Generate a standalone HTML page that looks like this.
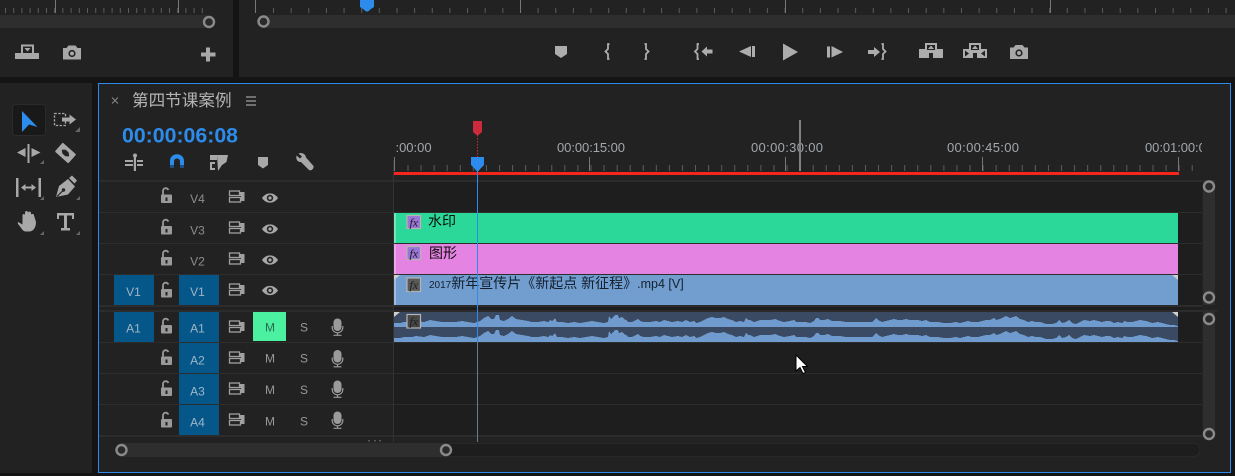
<!DOCTYPE html>
<html lang="zh"><head><meta charset="utf-8"><title>Timeline</title>
<style>
html,body{margin:0;padding:0;background:#141414;width:1235px;height:476px;overflow:hidden}
svg{display:block;position:absolute;left:0;top:0}
text{font-family:"Liberation Sans","Noto Sans CJK SC",sans-serif}
</style></head><body>
<svg width="1235" height="476" viewBox="0 0 1235 476" xmlns="http://www.w3.org/2000/svg">
<defs>
<clipPath id="rc"><rect x="395" y="130" width="807" height="30"/></clipPath>
<g id="lock"><rect x="-5.500" y="-1" width="11" height="8.500" rx="1" fill="#9a9a9a"/><rect x="-1" y="2" width="2" height="3.500" fill="#222"/><path d="M-3.500 -1V-4.200a2.800 2.800 0 0 1 5.400-1.300" fill="none" stroke="#9a9a9a" stroke-width="1.800"/></g>
<g id="sync"><rect x="-7.500" y="-5.500" width="10" height="4.500" fill="none" stroke="#a0a0a0" stroke-width="1.300"/><rect x="-7.500" y="1" width="11" height="4.500" fill="none" stroke="#a0a0a0" stroke-width="1.300"/><path d="M3 -4.500H7.500V4.500H4V-.5H3Z" fill="#a0a0a0"/></g>
<g id="eye"><path d="M-8 0C-4-6.200 4-6.200 8 0C4 6.200-4 6.200-8 0Z" fill="#a8a8a8"/><circle r="3.200" fill="#222"/><circle r="1.600" fill="#a8a8a8"/></g>
<g id="mic"><rect x="-4" y="-8.500" width="8" height="12.500" rx="4" fill="#9a9a9a"/><path d="M-5.300 -1V0.500a5.300 5.300 0 0 0 10.600 0V-1" fill="none" stroke="#9a9a9a" stroke-width="1.200"/><path d="M0 6V8M-4 8.300H4" stroke="#9a9a9a" stroke-width="1.200"/></g>
<g id="cam"><path d="M-9 -4.500H-5.500L-3.500-7H3.500L5.500-4.500H9V7H-9Z" fill="#a8a8a8"/><circle cy="1" r="3.600" fill="#222"/><circle cy="1" r="2" fill="#a8a8a8"/></g>
<polygon id="wave" fill="#6f9bce" shape-rendering="crispEdges" points="394,327 394,323 400,323 404,322 412,322 416,321 424,322 430,320 436,321 442,322 450,322 456,322 462,321 468,322 474,323 480,321 484,318 488,316 491,319 494,319 496,315 499,315 500,320 504,321 508,319 512,316 516,319 522,320 528,321 532,322 538,322 544,321 548,322 550,320 552,321 554,319 555,318 557,322 562,322 568,323 574,322 580,323 586,322 592,321 598,322 604,323 608,322 609,316 611,319 613,317 615,315 618,315 619,318 622,317 624,319 626,320 628,322 632,322 636,320 638,319 640,321 644,322 650,322 656,321 660,322 664,320 668,321 672,322 678,321 682,322 686,320 690,322 694,321 696,323 700,322 704,320 708,318 712,317 716,318 720,318 724,317 728,319 732,320 736,322 740,321 744,322 746,318 748,320 750,320 754,322 760,320 766,320 770,320 775,319 780,321 784,322 790,321 794,320 796,322 800,322 806,322 810,323 814,321 816,318 818,318 820,320 824,320 828,319 832,321 836,321 840,321 846,322 850,322 854,322 858,322 862,322 868,322 872,322 874,320 876,318 878,320 882,322 886,321 890,320 894,319 898,320 902,320 906,319 910,320 914,320 918,320 922,321 926,320 930,322 934,322 938,322 944,323 950,323 956,322 960,323 964,322 968,321 972,322 978,322 982,321 986,320 990,320 994,318 996,320 1000,319 1002,318 1006,316 1010,318 1016,316 1020,319 1024,320 1028,322 1032,321 1036,322 1040,322 1046,324 1052,324 1056,323 1059,320 1062,323 1066,322 1069,320 1072,323 1076,324 1080,322 1084,320 1090,321 1094,320 1098,321 1102,322 1106,321 1110,321 1114,323 1118,322 1122,323 1124,321 1128,322 1132,322 1136,321 1140,320 1146,321 1152,323 1158,322 1162,323 1166,324 1170,325 1174,325 1178,326 1178,327"/>
</defs>

<rect width="1235" height="476" fill="#141414"/>
<rect x="0" y="0" width="233" height="77" fill="#222"/>
<rect x="239" y="0" width="996" height="77" fill="#222"/>
<rect x="0" y="83" width="92" height="390" fill="#222"/>
<rect x="99" y="84" width="1131" height="388" fill="#222"/>

<line x1="5" y1="10.500" x2="205" y2="10.500" stroke="#5c5c5c" stroke-width="5" stroke-dasharray="1 7.200"/>
<path d="M55.500 0V13M178.500 0V13" stroke="#777"/>
<rect x="0" y="15" width="209" height="13" fill="#2e2e2e"/>
<circle cx="209" cy="22" r="5" fill="#2a2a2a" stroke="#8a8a8a" stroke-width="2.400"/>
<line x1="273" y1="10.500" x2="1235" y2="10.500" stroke="#5c5c5c" stroke-width="5" stroke-dasharray="1 16.640"/>
<path d="M255.500 0V13M520.500 0V13M785.500 0V13M1050.500 0V13" stroke="#777"/>
<rect x="263" y="15" width="972" height="13" fill="#2e2e2e"/>
<circle cx="263.500" cy="21.500" r="5" fill="#2a2a2a" stroke="#8a8a8a" stroke-width="2.400"/>
<path d="M360 0H374V7L371 9L368 11.500H366L363 9L360 7Z" fill="#2d8ceb"/>

<g fill="#a8a8a8">
<path d="M15 53H21V44.500H34V53H39V59H15Z"/><rect x="23" y="46.500" width="9" height="6.500" fill="#222"/><path d="M24.500 48H30.500L27.500 51.500Z"/>
<use href="#cam" x="72" y="52.500"/>
<path d="M206 47.500H210V52.500H215.500V56.500H210V61.500H206V56.500H201V52.500H206Z"/>
</g>
<g fill="#adadad">
<path d="M555 46H567V54L561 58L555 54Z"/>
<path d="M609.500 44H608V49L605.500 51.500L608 54V59H609.500" fill="none" stroke="#adadad" stroke-width="1.800"/>
<path d="M644.500 44H646V49L648.500 51.500L646 54V59H644.500" fill="none" stroke="#adadad" stroke-width="1.800"/>
<path d="M699 44H697.500V49L695 51.500L697.500 54V59H699" fill="none" stroke="#adadad" stroke-width="1.800"/>
<path d="M701.500 51.500L707 46.500V49.500H712.500V53.500H707V56.500Z"/>
<path d="M739 51.500L751 46V57Z"/><rect x="752" y="46" width="3" height="11"/>
<path d="M783 43.500L798 52L783 60.500Z"/>
<rect x="827" y="46.500" width="3" height="11"/><path d="M831.500 46L843 52L831.500 57.500Z"/>
<path d="M868 50H874V47L880 52L874 57V54H868Z"/>
<path d="M881.500 44H883V49L885.500 51.500L883 54V59H881.500" fill="none" stroke="#adadad" stroke-width="1.800"/>
<path d="M919 49H925V43H937V49H943V58H933V53H929V58H919Z"/><rect x="927" y="45" width="8" height="5" fill="#222"/><path d="M931 45.500L934 49H928Z"/>
<path d="M963 49H969V43H981V49H987V58H977V53H973V58H963Z"/><rect x="971" y="45" width="8" height="5" fill="#222"/><path d="M975 45.500L978 49H972Z"/>
<path d="M965 50.500L969 53.500L965 56.500ZM985 50.500L981 53.500L985 56.500Z" fill="#222"/>
<use href="#cam" x="1019" y="52"/>
</g>

<rect x="98.500" y="83.500" width="1132" height="389" fill="none" stroke="#2d8ceb" stroke-width="1"/>

<rect x="12.500" y="104.500" width="33" height="31" rx="3" fill="#191919" stroke="#2b2b2b"/>
<path d="M22 111L37.500 127L29 124.500L22 132Z" fill="#2d8ceb"/>
<g fill="#a8a8a8" stroke="none">
<rect x="54.500" y="113.500" width="11" height="12" fill="none" stroke="#a8a8a8" stroke-width="1.300" stroke-dasharray="2.300 1.500"/>
<path d="M62 117.500H69.500V114.500L76 119.500L69.500 124.500V121.500H62Z"/>
<rect x="27.500" y="144" width="2" height="19"/><path d="M17 152.500L25.500 148V157ZM40.500 152.500L31.500 148V157Z"/>
<g transform="translate(65.500 153) rotate(42)"><rect x="-9" y="-6" width="18" height="12" rx="1"/><path d="M-5 0L-2-2.500H2L5 0L2 2.500H-2Z" fill="#222"/></g>
<rect x="16" y="178" width="2.500" height="19"/><rect x="38.500" y="178" width="2.500" height="19"/>
<path d="M21 187.500L25.500 184V186.500H31.500V184L36 187.500L31.500 191V188.500H25.500V191Z"/>
<path d="M56 197L59 186L68 179L75 186.500L68 194.500Z"/><path d="M69 178L72 175.500L77 180.500L74.500 183.500Z"/><path d="M57 196.500L63 190.500" stroke="#222" stroke-width="1.200"/><circle cx="63.500" cy="190" r="1.700" fill="#222"/>
<path d="M19 222.500L22.500 224.500V215.500C22.500 213.500 25 213.500 25 215.500V212.500C25 210.500 28 210.500 28 212.500V213C28 211 31 211 31 213V215C31 213.500 34 213.500 34 215.500L36 222C36 228 33 231.500 29 231.500H26C23 231.500 22 229 20 226.500L18 224C17.500 222.500 18 221.500 19 222.500Z"/>
<path d="M57 213H74V219H72V215.500H67V228H70V230.500H61V228H64V215.500H59V219H57Z"/>
<path d="M44 160V164H40Z M80 196V200H76Z M44 196V200H40Z M44 231V235H40Z M80 231V235H76Z M80 127V132H75Z" fill="#666"/>
</g>

<path d="M112 97.500L118 103.500M118 97.500L112 103.500" stroke="#8a8a8a" stroke-width="1"/>
<text x="132" y="106" font-size="16.600" fill="#b4b4b4" style="font-family:'WenQuanYi Zen Hei','Noto Sans CJK SC',sans-serif">第四节课案例</text>
<path d="M246 97H256M246 101H256M246 105H256" stroke="#a0a0a0" stroke-width="1.300"/>
<text x="122" y="142.500" font-size="21.300" font-weight="700" fill="#2d8ceb" textLength="116" lengthAdjust="spacingAndGlyphs">00:00:06:08</text>

<g fill="#a8a8a8">
<path d="M133.800 156h2.200V171H133.800Z"/><circle cx="135" cy="155.500" r="2"/>
<path d="M125 160H133V162H125ZM125 164H133V166H125ZM137 160H143V162H137ZM137 164H143V166H137Z"/>
<path d="M170 168V161C170 152 184 152 184 161V168H180V161.500C180 157.500 174 157.500 174 161.500V168Z" fill="#2d8ceb"/>
<rect x="170" y="165" width="4" height="3" fill="#1d4f80"/><rect x="180" y="165" width="4" height="3" fill="#1d4f80"/>
<path d="M210 155H217V160H210ZM210 162H215V170H210Z"/><rect x="212" y="164" width="3" height="4" fill="#222"/>
<path d="M217 155H228L226.500 162L222 165L218 171Z"/>
<path d="M258 157H268V165L263 168.500L258 165Z"/>
<path d="M296.500 155.500L300 158.500L302 156.500L298.500 153.500C302 152 305.500 154 306 157.500L313.500 166C314 169 311.500 171 309 170L301 162C298 162.500 295.500 159.500 296.500 155.500Z"/>
</g>

<rect x="394" y="182" width="808" height="253" fill="#1e1e1e"/>
<rect x="99" y="180" width="1103" height="2" fill="#2c2c2c"/>
<path d="M99 212.500H1202M99 243.500H1202M99 274.500H1202M99 342.500H1202M99 373.500H1202M99 404.500H1202" stroke="#2d2d2d"/>
<rect x="99" y="305" width="1103" height="2" fill="#2c2c2c"/>
<rect x="99" y="310" width="1118" height="2" fill="#2c2c2c"/>
<rect x="99" y="435" width="1103" height="2" fill="#2c2c2c"/>
<rect x="393" y="160" width="1" height="282" fill="#333"/>

<g fill="#05578a">
<rect x="114" y="275" width="40" height="30"/><rect x="179" y="275" width="40" height="30"/>
<rect x="114" y="312" width="40" height="30"/><rect x="179" y="312" width="40" height="30"/>
<rect x="179" y="343" width="40" height="30"/><rect x="179" y="374" width="40" height="30"/><rect x="179" y="405" width="40" height="30"/>
</g>
<rect x="253" y="312" width="33" height="29" fill="#4bf0a0"/>

<g font-size="12" fill="#8d8d8d" text-anchor="middle">
<text x="197.500" y="203">V4</text><text x="197.500" y="234.500">V3</text><text x="197.500" y="265.500">V2</text>
</g>
<g font-size="12" fill="#9fb6c8" text-anchor="middle">
<text x="133.500" y="296">V1</text><text x="197.500" y="296">V1</text>
<text x="133.500" y="332.500">A1</text><text x="197.500" y="332.500">A1</text>
<text x="197.500" y="364.500">A2</text><text x="197.500" y="395.500">A3</text><text x="197.500" y="426.500">A4</text>
</g>
<g font-size="12" fill="#999" text-anchor="middle">
<text x="270" y="331.500" fill="#2a6b4d">M</text><text x="270" y="362.500">M</text><text x="270" y="394">M</text><text x="270" y="425.500">M</text>
<text x="304" y="331.500">S</text><text x="304" y="362.500">S</text><text x="304" y="394">S</text><text x="304" y="425.500">S</text>
</g>
<use href="#lock" x="166.500" y="195.500"/><use href="#lock" x="166.500" y="227"/><use href="#lock" x="166.500" y="258"/><use href="#lock" x="166.500" y="290"/><use href="#lock" x="166.500" y="326"/><use href="#lock" x="166.500" y="357.500"/><use href="#lock" x="166.500" y="388.500"/><use href="#lock" x="166.500" y="420"/>
<use href="#sync" x="237" y="196.500"/><use href="#sync" x="237" y="227.500"/><use href="#sync" x="237" y="258.500"/><use href="#sync" x="237" y="289.500"/><use href="#sync" x="237" y="326.500"/><use href="#sync" x="237" y="357.500"/><use href="#sync" x="237" y="388.500"/><use href="#sync" x="237" y="419.500"/>
<use href="#eye" x="270" y="198"/><use href="#eye" x="270" y="229"/><use href="#eye" x="270" y="260"/><use href="#eye" x="270" y="290.500"/>
<use href="#mic" x="337.500" y="327"/><use href="#mic" x="337.500" y="358.500"/><use href="#mic" x="337.500" y="389"/><use href="#mic" x="337.500" y="420"/>

<rect x="394" y="213" width="784" height="30" fill="#2bd89a"/><rect x="394" y="213" width="2" height="30" fill="#6fe6bd"/>
<rect x="394" y="244" width="784" height="30" fill="#e583e2"/><rect x="394" y="244" width="2" height="30" fill="#eda5eb"/>
<rect x="394" y="275" width="784" height="30" fill="#719dcf"/><rect x="394" y="275" width="2" height="30" fill="#9dbce0"/>
<rect x="394" y="312" width="784" height="30" fill="#3a4a63"/>
<use href="#wave"/><use href="#wave" y="15"/>
<path d="M394 275H400L394 280ZM1172 275H1178V280ZM394 312H400L394 317ZM1172 312H1178V317Z" fill="#cfcfcf"/>
<g stroke="#b5b5b5" stroke-width="1.200"><rect x="407" y="215.500" width="13.500" height="13" fill="#9a74d6"/><rect x="407" y="246.500" width="13.500" height="13" fill="#9a74d6"/><rect x="407" y="278" width="13.500" height="13.500" fill="#5a5a5a"/><rect x="407" y="314.500" width="13.500" height="13.500" fill="#474747"/></g>
<g font-size="12" font-style="italic" fill="#1c1c1c" text-anchor="middle">
<text x="413.800" y="226.500" style="font-family:'Liberation Serif',serif">fx</text><text x="413.800" y="257.500" style="font-family:'Liberation Serif',serif">fx</text><text x="413.800" y="289" style="font-family:'Liberation Serif',serif">fx</text><text x="413.800" y="325.500" style="font-family:'Liberation Serif',serif">fx</text>
</g>
<text x="428" y="226" font-size="14" fill="#0c0c0c">水印</text>
<text x="429" y="258" font-size="14" fill="#0c0c0c">图形</text>
<text x="429" y="288" font-size="14" fill="#14202e"><tspan font-size="10">2017</tspan>新年宣传片《新起点 新征程》<tspan font-size="12.500">.mp4 [V]</tspan></text>

<g clip-path="url(#rc)" font-size="13" fill="#a2a8ad">
<text x="381" y="152">00:00:00</text>
<text x="557" y="152" textLength="68">00:00:15:00</text>
<text x="751" y="152" textLength="72">00:00:30:00</text>
<text x="947" y="152" textLength="72">00:00:45:00</text>
<text x="1145" y="152" textLength="68">00:01:00:00</text>
</g>
<line x1="407.500" y1="168" x2="1195" y2="168" stroke="#5c5c5c" stroke-width="6" stroke-dasharray="1 12.070"/>
<path d="M394.500 157V171M589.500 157V171M785.500 157V171M982.500 157V171M1178.500 157V171" stroke="#777"/>
<rect x="799" y="120" width="2" height="51" fill="#808080"/>
<rect x="394" y="172" width="785" height="3" fill="#f5271c"/>
<path d="M473 121H482V132L478.500 135H476.500L473 132Z" fill="#cc2b3c"/>
<line x1="477.500" y1="135" x2="477.500" y2="157" stroke="#cc2b3c" stroke-dasharray="1.500 1.500"/>
<rect x="477" y="170" width="1" height="172" fill="#2d8ceb"/>
<rect x="477" y="342" width="1" height="100" fill="#6d7b88"/>
<path d="M471 157H484V165L481 168L478.500 171H476.500L474 168L471 165Z" fill="#2d8ceb"/>

<rect x="1203" y="180" width="12" height="254" fill="#2e2e2e"/>
<rect x="1202" y="305" width="15" height="5" fill="#222"/><rect x="1202" y="310" width="15" height="2" fill="#2c2c2c"/>
<circle cx="1209" cy="186.500" r="5" fill="#2a2a2a" stroke="#8a8a8a" stroke-width="2.400"/>
<circle cx="1209" cy="297.500" r="5" fill="#2a2a2a" stroke="#8a8a8a" stroke-width="2.400"/>
<circle cx="1209" cy="319" r="5" fill="#2a2a2a" stroke="#8a8a8a" stroke-width="2.400"/>
<circle cx="1209" cy="434" r="5" fill="#2a2a2a" stroke="#8a8a8a" stroke-width="2.400"/>

<path d="M369 441.500V440M375 441.500V440M380 441.500V440" stroke="#8a8a8a"/>
<rect x="440" y="443.500" width="760" height="13" rx="6.500" fill="#1d1d1d" stroke="#282828"/>
<rect x="122" y="443" width="324" height="14" fill="#2e2e2e"/>
<circle cx="121.500" cy="450" r="5" fill="#2a2a2a" stroke="#8a8a8a" stroke-width="2.400"/>
<circle cx="446" cy="450" r="5" fill="#2a2a2a" stroke="#8a8a8a" stroke-width="2.400"/>

<path d="M796 355V371L800 367.500L803 373.500L805.500 372.500L802.500 366.500H807.500Z" fill="#fff" stroke="#000" stroke-width="1"/>
</svg>
</body></html>
